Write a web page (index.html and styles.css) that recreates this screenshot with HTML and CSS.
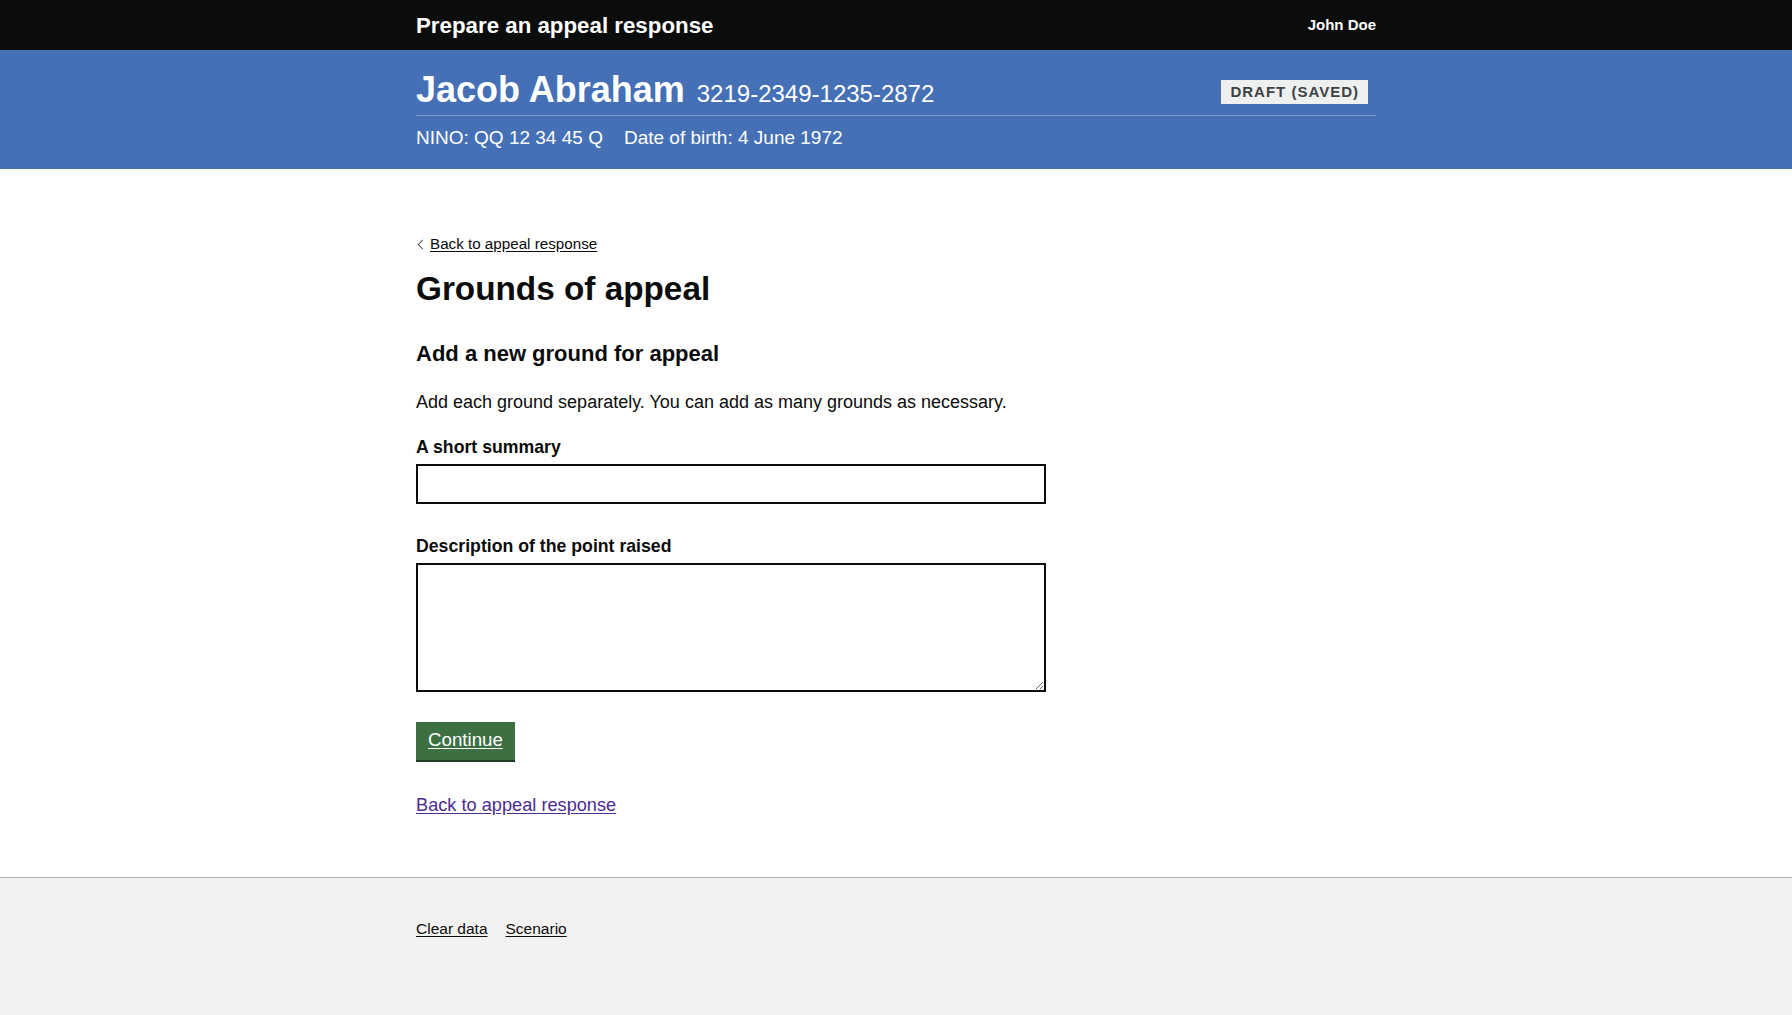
FILE: index.html
```html
<!DOCTYPE html>
<html lang="en">
<head>
<meta charset="utf-8">
<title>Grounds of appeal - Prepare an appeal response</title>
<link rel="stylesheet" href="styles.css">
</head>
<body>
<header class="top-header">
  <div class="container top-header-inner">
    <span class="service-name">Prepare an appeal response</span>
    <span class="user-name">John Doe</span>
  </div>
</header>
<section class="case-banner">
  <div class="container">
    <div class="case-row">
      <h2 class="case-title">Jacob Abraham <span class="case-ref">3219-2349-1235-2872</span></h2>
      <strong class="tag">DRAFT (SAVED)</strong>
    </div>
    <div class="case-meta">
      <span class="meta-item">NINO: QQ 12 34 45 Q</span>
      <span class="meta-item">Date of birth: 4 June 1972</span>
    </div>
  </div>
</section>
<main class="main">
  <a class="back-link" href="#">Back to appeal response</a>
  <h1 class="heading-xl">Grounds of appeal</h1>
  <h2 class="heading-m">Add a new ground for appeal</h2>
  <p class="body">Add each ground separately. You can add as many grounds as necessary.</p>
  <form class="form">
    <div class="form-group">
      <label class="label" for="summary">A short summary</label>
      <input class="input" id="summary" type="text">
    </div>
    <div class="form-group">
      <label class="label" for="description">Description of the point raised</label>
      <textarea class="textarea" id="description" rows="5"></textarea>
    </div>
    <button class="button" type="button">Continue</button>
  </form>
  <p class="bottom-link-wrap"><a class="visited-link" href="#">Back to appeal response</a></p>
</main>
<footer class="footer">
  <div class="container footer-links">
    <a class="footer-link" href="#">Clear data</a>
    <a class="footer-link" href="#">Scenario</a>
  </div>
</footer>
</body>
</html>
```

FILE: styles.css
```css
html, body {
  margin: 0;
  padding: 0;
  background: #f3f2f1;
}

body {
  font-family: "Liberation Sans", Arial, sans-serif;
  color: #0b0c0c;
}

.container {
  width: 960px;
  margin: 0 auto;
}

/* top header */
.top-header {
  background: #0b0c0c;
  color: #ffffff;
}

.top-header-inner {
  display: flex;
  justify-content: space-between;
  align-items: center;
  height: 50px;
}

.service-name {
  font-size: 22.3px;
  line-height: 26px;
  font-weight: 700;
  padding-top: 1px;
}

.user-name {
  font-size: 15px;
  line-height: 26px;
  font-weight: 700;
  padding-bottom: 1px;
}

/* case banner */
.case-banner {
  background: #4570b6;
  color: #ffffff;
  padding-top: 20px;
  padding-bottom: 19px;
}

.case-row {
  display: flex;
  justify-content: space-between;
  align-items: flex-start;
  border-bottom: 1px solid rgba(255, 255, 255, 0.3);
  padding-bottom: 5px;
}

.case-title {
  margin: 0;
  font-size: 36px;
  line-height: 40px;
  font-weight: 700;
}

.case-ref {
  font-size: 24px;
  line-height: 1;
  font-weight: 400;
  margin-left: 2px;
}

.tag {
  margin-top: 10px;
  margin-right: 8px;
  background: #eef0f0;
  color: #3d4245;
  font-size: 15px;
  line-height: 24px;
  height: 24px;
  font-weight: 700;
  letter-spacing: 1px;
  padding: 0 9px;
}

.case-meta {
  display: flex;
  gap: 21px;
  margin-top: 9px;
  font-size: 19px;
  line-height: 25px;
}

/* main */
.main {
  display: block;
  background: #ffffff;
  padding: 65px calc((100% - 960px) / 2) 59px;
}

.back-link {
  display: inline-block;
  position: relative;
  padding-left: 14px;
  font-size: 15.2px;
  line-height: 20px;
  color: #0b0c0c;
  text-decoration: underline;
  text-underline-offset: 2px;
}

.back-link::before {
  content: "";
  position: absolute;
  left: 3px;
  top: 7px;
  width: 6px;
  height: 6px;
  border-left: 1px solid #505a5f;
  border-top: 1px solid #505a5f;
  transform: rotate(-45deg);
}

.heading-xl {
  margin: 15px 0 0;
  font-size: 33.3px;
  line-height: 40px;
  font-weight: 700;
}

.heading-m {
  margin: 30px 0 0;
  font-size: 22px;
  line-height: 30px;
  font-weight: 700;
}

.body {
  margin: 21px 0 0;
  font-size: 18px;
  line-height: 25px;
}

.form {
  margin-top: 20px;
}

.form-group {
  display: flex;
  flex-direction: column;
  margin-bottom: 30px;
}

.form-group + .form-group {
  margin-top: 3px;
}

.label {
  font-size: 17.7px;
  line-height: 25px;
  font-weight: 700;
  margin-bottom: 4px;
}

.input {
  box-sizing: border-box;
  width: 630px;
  height: 40px;
  border: 2px solid #0b0c0c;
  border-radius: 0;
  margin: 0;
  padding: 5px;
  font-family: inherit;
  font-size: 18px;
  background: #ffffff;
}

.textarea {
  box-sizing: border-box;
  width: 630px;
  height: 129px;
  border: 2px solid #0b0c0c;
  border-radius: 0;
  margin: 0;
  padding: 5px;
  font-family: inherit;
  font-size: 18px;
  background: #ffffff;
}

.button {
  display: block;
  box-sizing: border-box;
  height: 38px;
  margin: 0;
  padding: 0 12px 2px;
  border: 0;
  border-radius: 0;
  background: #3c7043;
  box-shadow: 0 2px 0 #1e3a22;
  color: #ffffff;
  font-family: inherit;
  font-size: 18.7px;
  line-height: 22px;
  text-decoration: underline;
  text-underline-offset: 2px;
  cursor: pointer;
}

.bottom-link-wrap {
  margin: 33px 0 0;
  font-size: 18.2px;
  line-height: 25px;
}

.visited-link {
  color: #4c2c92;
  text-decoration: underline;
  text-underline-offset: 2px;
}

/* footer */
.footer {
  border-top: 1px solid #b1b4b6;
  background: #f3f2f1;
  padding-top: 41px;
  padding-bottom: 60px;
}

.footer-links {
  display: flex;
  gap: 18px;
}

.footer-link {
  font-size: 15.5px;
  line-height: 20px;
  color: #0b0c0c;
  text-decoration: underline;
  text-underline-offset: 2px;
}
```
